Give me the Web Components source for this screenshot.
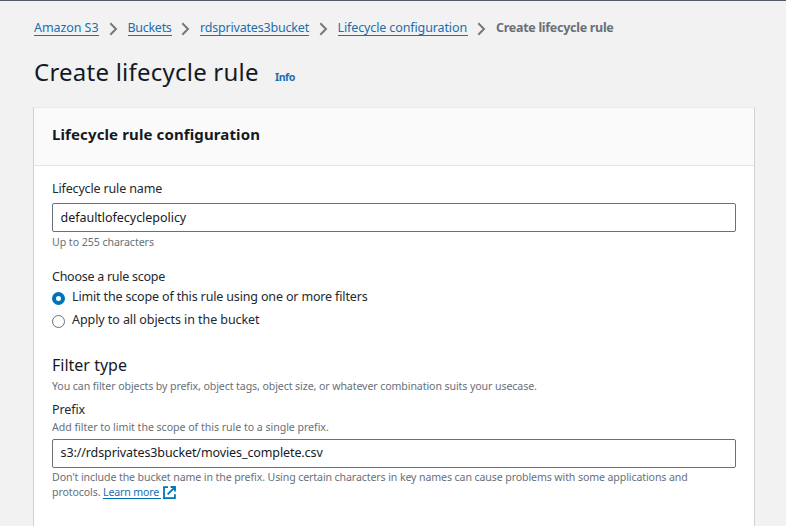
<!DOCTYPE html>
<html lang="en">
<head>
<meta charset="utf-8">
<title>Create lifecycle rule</title>
<style>
html,body{margin:0;height:526px;overflow:hidden;background:#f2f2f2}
body{font-family:"Noto Sans","Open Sans",sans-serif;color:#16191f}
</style>
</head>
<body>
<lifecycle-page></lifecycle-page>
<script>
const define = (name, html) => {
  const tpl = document.createElement('template');
  tpl.innerHTML = html;
  customElements.define(name, class extends HTMLElement {
    constructor() {
      super();
      this.attachShadow({ mode: 'open' }).append(tpl.content.cloneNode(true));
    }
  });
};

define('crumb-link', `<style>
:host{display:block;height:18px;font-size:12.5px;line-height:22px;color:#1a6fb0;white-space:nowrap;border-bottom:1px solid #1a72b4;box-sizing:content-box}
</style><slot></slot>`);

define('crumb-arrow', `<style>
:host{display:block;height:20px}
svg{display:block;margin:5px auto 0;width:9px;height:14px}
</style><svg viewBox="0 0 9 14"><path d="M1.3 1.2 7 7 1.3 12.8" fill="none" stroke="#727980" stroke-width="2"/></svg>`);

define('form-text', `<style>
:host{display:block;height:20px;font-size:12.5px;line-height:22px;color:#23282f;white-space:nowrap}
:host([kind=small]){height:15px;font-size:10.6px;line-height:17px;color:#687078}
:host([kind=section]){font-size:16px;line-height:20px;color:#16191f}
:host([kind=heading]){font-size:15px;line-height:20px;font-weight:700;color:#16191f}
</style><slot></slot>`);

define('text-field', `<style>
:host{display:block;box-sizing:border-box;height:29px;border:1px solid #687078;border-radius:2px;background:#fff;padding:3px 7.5px 0;font-size:12.5px;line-height:20px;color:#16191f;white-space:nowrap}
</style><slot></slot>`);

define('radio-option', `<style>
:host{display:flex;height:23px;font-size:12.5px;line-height:22px;color:#23282f;white-space:nowrap}
i{box-sizing:border-box;flex:none;width:13px;height:13px;margin:5.5px 7px 0 0;border:1px solid #687078;border-radius:50%;background:#fff}
:host([checked]) i{border:4px solid #0073bb}
</style><i></i><span><slot></slot></span>`);

define('external-link', `<style>
:host{display:flex;color:#1a6fb0}
span{height:14px;width:58px;border-bottom:1px solid #0073bb}
svg{display:block;width:13px;height:13px;margin:2px 0 0 2px}
</style><span><slot></slot></span><svg viewBox="0 0 13 13" fill="none" stroke="#0073bb" stroke-width="1.8"><path d="M5 1.2H1v10.9h10.9V8.2M7.6 1H12v4.4M11.7 1.3 4.6 8.4"/></svg>`);

define('config-panel', `<style>
:host{display:block;box-sizing:border-box;width:722px;height:440px;border:1px solid #d0d3d4;border-top-color:#e8eaea;background:#fff}
header{height:58px;box-sizing:border-box;padding:16px 18px 0;background:#fafafa;border-bottom:1px solid #e4e6e6}
section{padding:12px 18px 0}
</style><header><slot name="heading"></slot></header><section><slot></slot></section>`);

define('lifecycle-page', `<style>
:host{display:block;box-sizing:border-box;height:526px;overflow:hidden;border-top:1px solid #545b64;padding:16px 0 0 33px}
nav{display:flex;height:20px;padding-left:1px}
nav b{font-size:12.5px;line-height:22px;color:#687078;white-space:nowrap;letter-spacing:-.29px}
.title{display:flex;height:30px;margin-top:20px;padding-left:1px}
h1{margin:0;width:241px;font-size:24px;font-weight:400;line-height:30px;letter-spacing:.23px;white-space:nowrap}
.info{font-size:10.6px;font-weight:700;line-height:15px;margin-top:13px;color:#1a6fb0;letter-spacing:-.45px}
config-panel{margin-top:20px}
.end{display:flex}
.end span{width:51px}
</style>
<nav>
<crumb-link style="width:65px;letter-spacing:-.07px">Amazon S3</crumb-link><crumb-arrow style="width:28.5px"></crumb-arrow>
<crumb-link style="width:44px;letter-spacing:-.29px">Buckets</crumb-link><crumb-arrow style="width:28.5px"></crumb-arrow>
<crumb-link style="width:109px;letter-spacing:-.19px">rdsprivates3bucket</crumb-link><crumb-arrow style="width:28.5px"></crumb-arrow>
<crumb-link style="width:130px;letter-spacing:-.117px">Lifecycle configuration</crumb-link><crumb-arrow style="width:28.5px"></crumb-arrow>
<b>Create lifecycle rule</b>
</nav>
<div class="title"><h1>Create lifecycle rule</h1><span class="info">Info</span></div>
<config-panel>
<form-text slot="heading" kind="heading" style="letter-spacing:.119px">Lifecycle rule configuration</form-text>
<form-text style="letter-spacing:-.15px">Lifecycle rule name</form-text>
<text-field style="margin-top:5px;padding-top:4px;letter-spacing:-.03px">defaultlofecyclepolicy</text-field>
<form-text kind="small" style="margin-top:2px;letter-spacing:-.05px">Up to 255 characters</form-text>
<form-text style="margin-top:17px;letter-spacing:-.26px">Choose a rule scope</form-text>
<radio-option checked style="letter-spacing:-.155px">Limit the scope of this rule using one or more filters</radio-option>
<radio-option style="letter-spacing:-.07px">Apply to all objects in the bucket</radio-option>
<form-text kind="section" style="margin-top:23px">Filter type</form-text>
<form-text kind="small" style="margin-top:3px;letter-spacing:-.093px">You can filter objects by prefix, object tags, object size, or whatever combination suits your usecase.</form-text>
<form-text style="margin-top:6px;letter-spacing:-.1px">Prefix</form-text>
<form-text kind="small" style="letter-spacing:-.033px">Add filter to limit the scope of this rule to a single prefix.</form-text>
<text-field style="margin-top:5px;letter-spacing:-.1px">s3://rdsprivates3bucket/movies_complete.csv</text-field>
<form-text kind="small" style="margin-top:1px;letter-spacing:-.108px">Don't include the bucket name in the prefix. Using certain characters in key names can cause problems with some applications and</form-text>
<form-text kind="small" style="letter-spacing:-.1px"><div class="end"><span>protocols.</span><external-link style="letter-spacing:-.16px">Learn more</external-link></div></form-text>
</config-panel>`);
</script>
</body>
</html>
